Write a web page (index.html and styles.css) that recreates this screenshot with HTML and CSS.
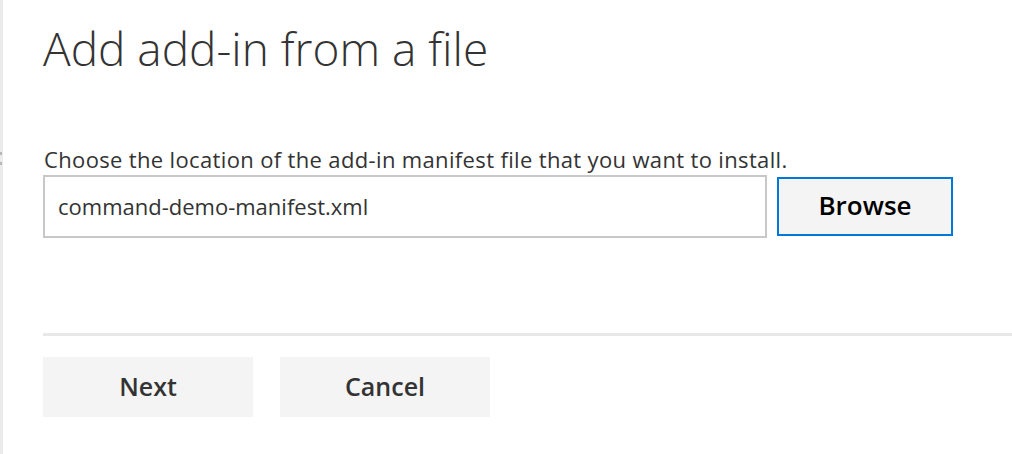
FILE: index.html
```html
<!DOCTYPE html>
<html>
<head>
<meta charset="utf-8">
<link rel="stylesheet" href="styles.css">
</head>
<body>
<div class="page">
  <div class="edge"><span class="tick t1"></span><span class="tick t2"></span></div>
  <main class="main">
    <h1 class="title">Add add-in from a file</h1>
    <p class="label">Choose the location of the add-in manifest file that you want to install.</p>
    <div class="file-row">
      <div class="file-input">command-demo-manifest.xml</div>
      <button class="btn browse">Browse</button>
    </div>
    <hr class="divider">
    <div class="actions">
      <button class="btn action">Next</button>
      <button class="btn action">Cancel</button>
    </div>
  </main>
</div>
</body>
</html>
```

FILE: styles.css
```css
* { box-sizing: border-box; }
html, body { margin: 0; padding: 0; background: #fff; }
body { font-family: "Open Sans", "Noto Sans", sans-serif; color: #333; }
.page { display: flex; height: 454px; width: 1012px; overflow: hidden; }
.edge { width: 3px; background: #ebebeb; position: relative; flex: none; }
.tick { position: absolute; left: 0; width: 2px; height: 3px; background: #b8b8b8; }
.t1 { top: 152px; }
.t2 { top: 162px; }
.main { flex: 1; padding-left: 40px; display: flex; flex-direction: column; }
.title {
  margin: 20px 0 0 0;
  font-size: 46px;
  font-weight: 300;
  line-height: 56px;
  color: #333;
}
.label {
  margin: 70px 0 0 1px;
  font-size: 22px;
  line-height: 26px;
  letter-spacing: 0.35px;
  color: #333;
}
.file-row { display: flex; align-items: center; margin-top: 3px; gap: 10px; }
.file-input {
  width: 724px; height: 63px;
  border: 2px solid #c8c8c8;
  padding-left: 13px;
  padding-bottom: 2px;
  display: flex; align-items: center;
  font-size: 22px; color: #333;
}
.btn {
  font-family: "Open Sans", "Noto Sans", sans-serif;
  font-weight: 600;
  font-size: 25px;
  border: none;
  background: #f4f4f4;
  padding: 0 0 3px 0;
  cursor: pointer;
}
.browse {
  width: 176px; height: 59px;
  border: 2px solid #0078d7;
  color: #000;
  font-size: 26px;
}
.divider {
  margin: 95px 0 0 0;
  border: none;
  height: 3px;
  background: #e8e8e8;
}
.actions { display: flex; gap: 27px; margin-top: 21px; }
.action { width: 210px; height: 60px; color: #333; }
```
